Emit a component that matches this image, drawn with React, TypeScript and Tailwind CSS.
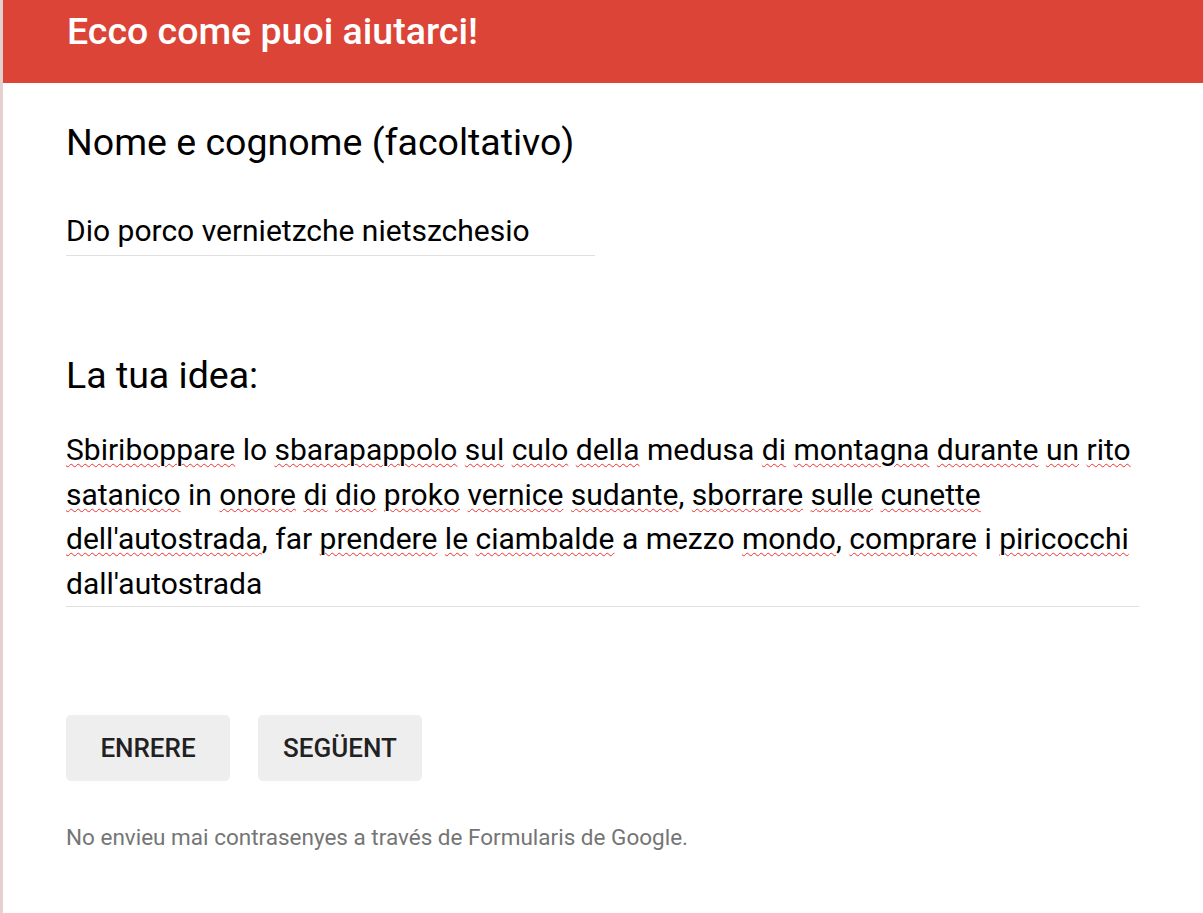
const lines: [string, boolean][][] = [
  [
    ['Sbiriboppare', true], [' lo ', false], ['sbarapappolo', true], [' ', false], ['sul', true], [' ', false],
    ['culo', true], [' ', false], ['della', true], [' medusa ', false], ['di', true], [' ', false],
    ['montagna', true], [' ', false], ['durante', true], [' ', false], ['un', true], [' ', false], ['rito', true],
  ],
  [
    ['satanico', true], [' in ', false], ['onore', true], [' ', false], ['di', true], [' ', false],
    ['dio', true], [' ', false], ['proko', true], [' ', false], ['vernice', true], [' ', false],
    ['sudante', true], [', ', false], ['sborrare', true], [' ', false], ['sulle', true], [' ', false], ['cunette', true],
  ],
  [
    ["dell'autostrada", true], [', far ', false], ['prendere', true], [' ', false], ['le', true], [' ', false],
    ['ciambalde', true], [' a mezzo ', false], ['mondo', true], [', ', false], ['comprare', true], [' i ', false],
    ['piricocchi', true],
  ],
  [["dall'autostrada", false]],
]

export default function App() {
  return (
    <div className="min-h-[913px] bg-white border-l-[3px] border-[#e6d0d0] font-['Roboto',sans-serif]">
      <div className="h-[83px] bg-[#db4437] pl-[64px] pt-[8px]">
        <h1 className="text-[37.5px] leading-[46px] font-medium text-white">Ecco come puoi aiutarci!</h1>
      </div>

      <div className="pl-[63px] pr-[62px]">
        <div className="pt-[35px]">
          <div className="text-[37.5px] leading-[48px] text-black">Nome e cognome (facoltativo)</div>
          <div className="mt-[46px] w-[529px] border-b border-[#e0e0e0] pb-[5px] text-[30px] leading-[38px] text-black">
            Dio porco vernietzche nietszchesio
          </div>
        </div>

        <div className="pt-[95px]">
          <div className="text-[37.5px] leading-[48px] text-black">La tua idea:</div>
          <div className="mt-[29px] w-[1073px] border-b border-[#e0e0e0] text-[30px] leading-[44.5px] text-black">
            {lines.map((line, i) => (
              <div key={i} className="whitespace-pre">
                {line.map(([w, bad], j) =>
                  bad ? (
                    <span key={j} className="underline decoration-wavy decoration-[#f03030] decoration-1 underline-offset-[3px]">
                      {w}
                    </span>
                  ) : (
                    <span key={j}>{w}</span>
                  )
                )}
              </div>
            ))}
          </div>
        </div>

        <div className="flex gap-[28px] pt-[108px]">
          <button className="w-[164px] h-[66px] rounded-[5px] bg-[#eeeeee] text-[26px] font-medium text-[#212121]">ENRERE</button>
          <button className="w-[164px] h-[66px] rounded-[5px] bg-[#eeeeee] text-[26px] font-medium text-[#212121]">SEGÜENT</button>
        </div>

        <p className="pt-[42px] text-[22.5px] leading-[28px] text-[#757575]">
          No envieu mai contrasenyes a través de Formularis de Google.
        </p>
      </div>
    </div>
  )
}
